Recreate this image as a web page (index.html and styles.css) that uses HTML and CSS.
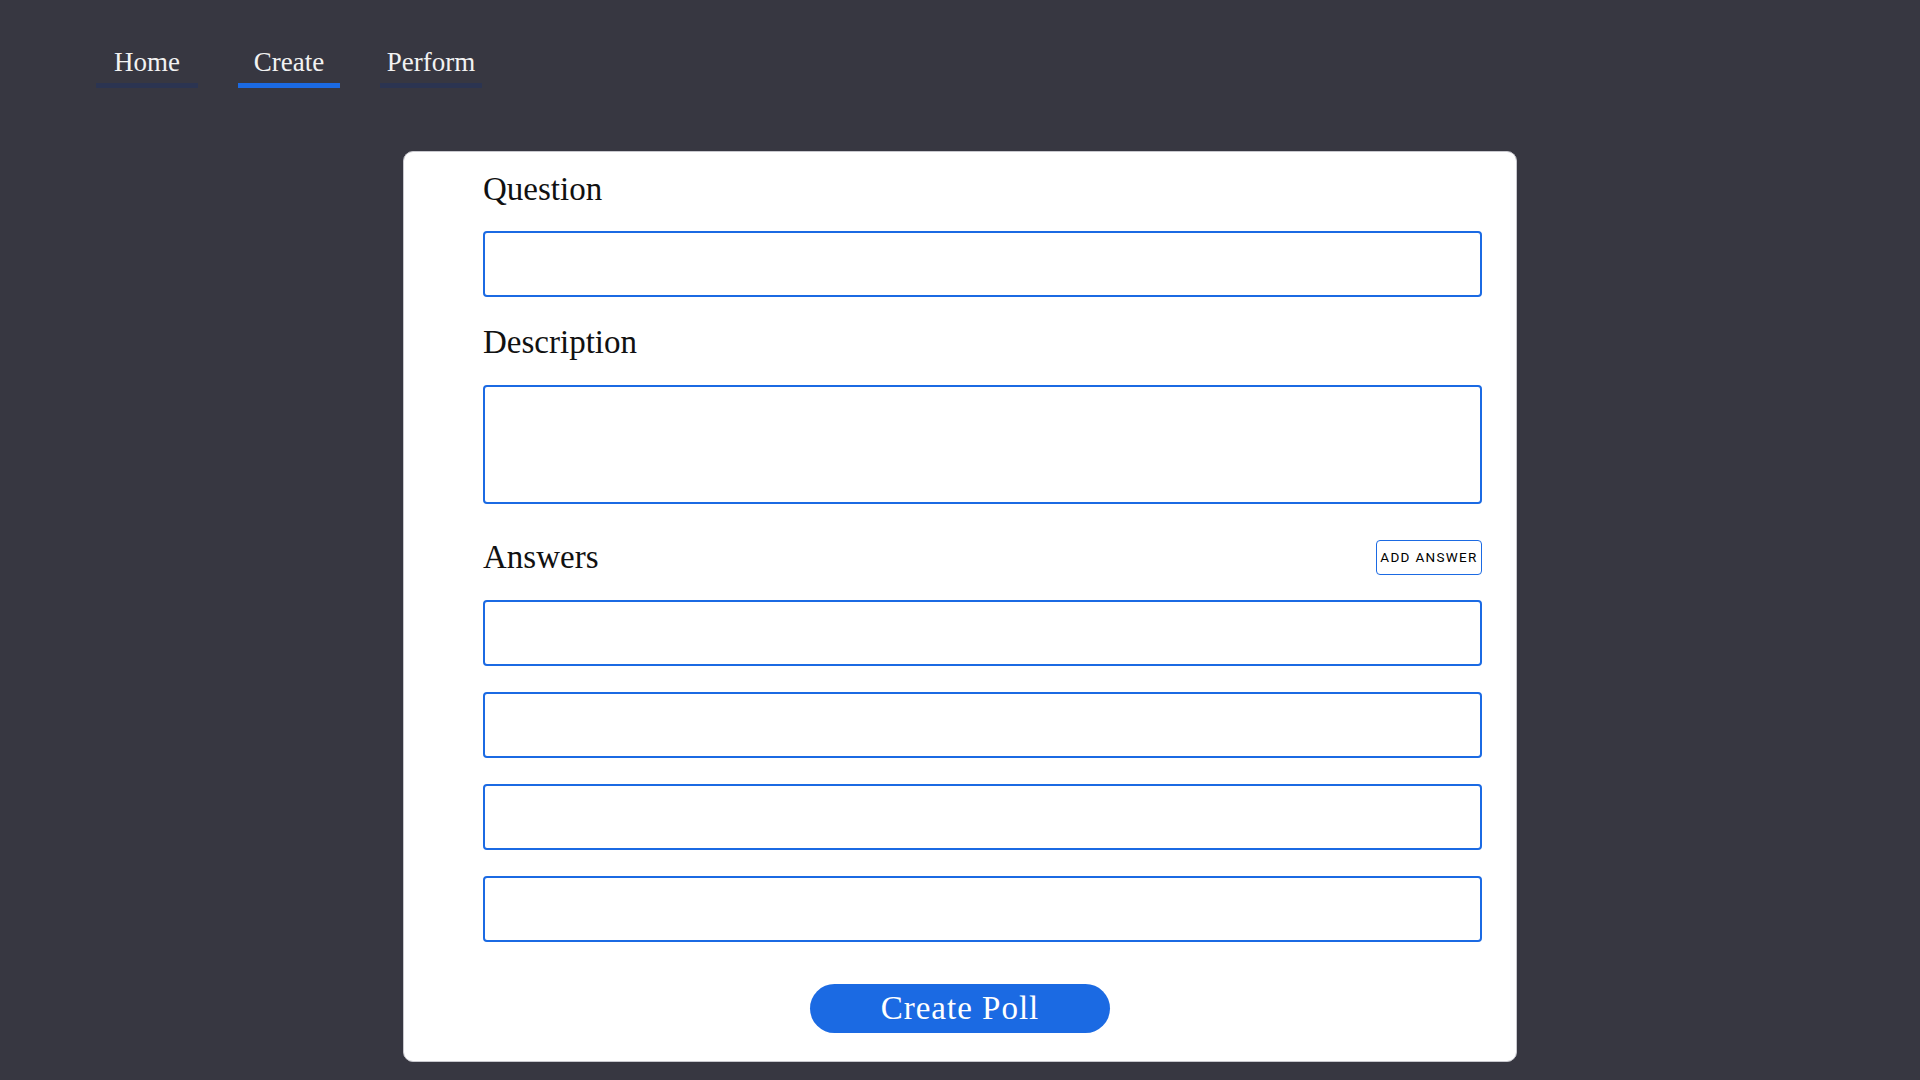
FILE: index.html
```html
<!DOCTYPE html>
<html lang="en">
<head>
<meta charset="utf-8">
<title>Create Poll</title>
<link rel="stylesheet" href="styles.css">
</head>
<body>
<nav class="tabs">
  <a class="tab">Home</a>
  <a class="tab active">Create</a>
  <a class="tab">Perform</a>
</nav>
<main class="card">
  <div class="fields">
    <label class="label">Question</label>
    <input class="field field-question" type="text">
    <label class="label label-desc">Description</label>
    <textarea class="field field-desc"></textarea>
    <div class="answers-head">
      <span class="label">Answers</span>
      <button class="add-btn" type="button">ADD ANSWER</button>
    </div>
    <div class="answers">
      <input class="field" type="text">
      <input class="field" type="text">
      <input class="field" type="text">
      <input class="field" type="text">
    </div>
  </div>
  <div class="submit-row">
    <button class="submit" type="button">Create Poll</button>
  </div>
</main>
</body>
</html>
```
FILE: styles.css
```css
* { box-sizing: border-box; }
html, body { margin: 0; padding: 0; }
body {
  background: #373741;
  min-height: 1080px;
  font-family: "Liberation Serif", "Times New Roman", serif;
  overflow: hidden;
}
.tabs {
  display: flex;
  gap: 40px;
  padding: 47px 0 0 96px;
}
.tab {
  display: block;
  width: 102px;
  text-align: center;
  color: #f2f2f2;
  font-size: 27px;
  line-height: 31px;
  padding-bottom: 5px;
  border-bottom: 5px solid #2b3451;
}
.tab.active { border-bottom-color: #1b6ae3; }
.card {
  width: 1114px;
  margin: 63px auto 0;
  background: #fff;
  border: 1px solid #c8c8ce;
  border-radius: 10px;
  padding: 18px 0 28px;
}
.fields {
  margin: 0 34px 0 79px;
  display: flex;
  flex-direction: column;
}
.label {
  display: block;
  font-size: 33px;
  line-height: 38px;
  color: #111;
}
.field {
  display: block;
  width: 100%;
  height: 66px;
  border: 2px solid #1b6ae3;
  border-radius: 4px;
  background: #fff;
  margin: 0;
  padding: 0 12px;
  font: inherit;
  outline: none;
}
.field-question { margin-top: 23px; }
.label-desc { margin-top: 26px; }
.field-desc {
  margin-top: 24px;
  height: 119px;
  resize: none;
}
.answers-head {
  margin-top: 34px;
  height: 38px;
  display: flex;
  align-items: center;
  justify-content: space-between;
}
.add-btn {
  height: 35px;
  width: 106px;
  padding: 0;
  background: #fff;
  border: 1px solid #1b6ae3;
  border-radius: 4px;
  font-family: Roboto, "Liberation Sans", sans-serif;
  font-size: 13.5px;
  font-weight: 400;
  letter-spacing: 1.3px;
  color: #000;
  white-space: nowrap;
}
.answers {
  margin-top: 24px;
  display: flex;
  flex-direction: column;
  gap: 26px;
}
.submit-row {
  display: flex;
  justify-content: center;
  margin-top: 42px;
}
.submit {
  width: 300px;
  height: 49px;
  border: none;
  border-radius: 25px;
  background: #1b6ae3;
  color: #fff;
  font-family: "Liberation Serif", "Times New Roman", serif;
  font-size: 33px;
  letter-spacing: 1px;
  padding: 0;
}
```
